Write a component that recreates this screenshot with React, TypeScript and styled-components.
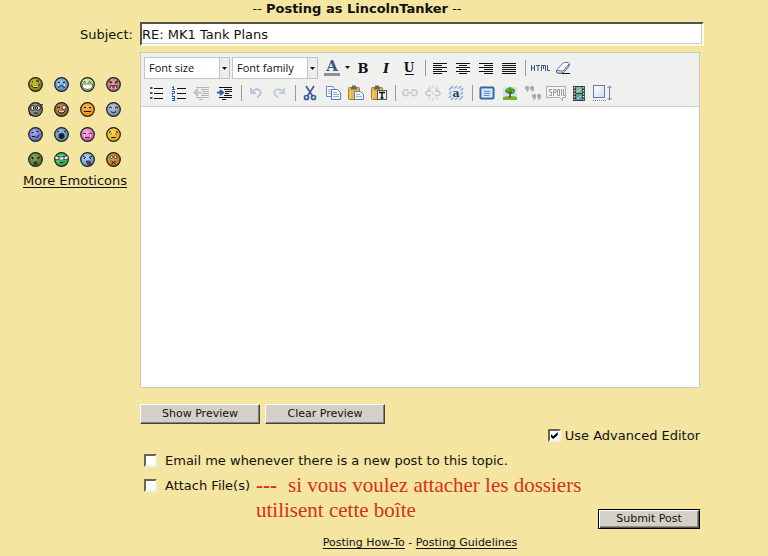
import React from "react";
import styled, { createGlobalStyle } from "styled-components";

const sans = `"DejaVu Sans", Verdana, sans-serif`;

const GlobalStyle = createGlobalStyle`
  *, *::before, *::after { box-sizing: border-box; }
  body { margin: 0; background: #f4e5a0; color: #111; font: 13px/17px ${sans}; }
`;

const Form = styled.form`padding: 0 68px 0 14px;`;
const Title = styled.h1`
  margin: 0 0 5px;
  font-size: 13px;
  line-height: 17px;
  font-weight: 400;
  text-align: center;
`;
const Columns = styled.div`
  display: grid;
  grid-template-columns: 122px minmax(0, 1fr);
  column-gap: 4px;
`;
const SubjectLabel = styled.label`
  padding: 4px 3px 0 0;
  text-align: right;
`;
const SubjectField = styled.div`
  display: flex;
  margin: 0 -4px 6px 0;
`;
const SubjectInput = styled.input`
  flex: 1;
  min-width: 0;
  height: 24px;
  padding: 0;
  border: 2px solid;
  border-color: #55534c #fffbe8 #fffbe8 #55534c;
  box-shadow: inset -1px -1px 0 #d0cdbb;
  border-radius: 0;
  background: #fff;
  color: #111;
  font: inherit;
`;
const Side = styled.aside`
  display: flex;
  flex-direction: column;
  align-items: center;
  padding-top: 25px;
`;
const FaceGrid = styled.div`
  display: grid;
  grid-template-columns: repeat(4, 15px);
  gap: 10px 11px;
  margin: 0 2px 5px 0;
`;
const FaceButton = styled.button`
  display: block;
  width: 15px;
  height: 15px;
  padding: 0;
  border: 0;
  background: none;
  cursor: pointer;
  svg { display: block; }
`;
const TextLink = styled.a`
  color: #111;
  text-decoration: underline;
  text-underline-offset: 2px;
`;
const Editor = styled.div`
  display: flex;
  flex-direction: column;
  border: 1px solid #ccc9b8;
  background: #fff;
`;
const Toolbar = styled.div`
  padding: 2px 3px 1px;
  background: #f0f0ee;
  border-bottom: 1px solid #ccc;
`;
const ToolRow = styled.div`
  display: flex;
  align-items: center;
  height: 25px;
`;
const Picker = styled.label`
  position: relative;
  width: 86px;
  height: 22px;
  margin-right: 2px;
  flex: none;
  svg { position: absolute; right: 1px; top: 1px; pointer-events: none; }
`;
const PickerSelect = styled.select`
  appearance: none;
  width: 100%;
  height: 100%;
  padding: 0 12px 0 4px;
  border: 1px solid #c4c4c4;
  border-radius: 0;
  background: #fff;
  color: #111;
  font: 11px/20px "Open Sans", sans-serif;
`;
const ToolButton = styled.button<{ $narrow?: boolean }>`
  flex: none;
  display: flex;
  justify-content: center;
  align-items: center;
  width: ${(p) => (p.$narrow ? 8 : 23)}px;
  height: 22px;
  padding: 0;
  border: 0;
  background: none;
  svg { display: block; flex: none; }
`;
const Separator = styled.span`
  flex: none;
  width: 1px;
  height: 16px;
  margin: 0 2px 0 5px;
  background: #999;
`;
const Message = styled.textarea`
  display: block;
  height: 280px;
  padding: 6px;
  border: 0;
  outline: 0;
  resize: none;
  background: #fff;
  font: inherit;
`;
const ButtonRow = styled.div`
  display: flex;
  gap: 5px;
  margin-top: 16px;
`;
const PushButton = styled.button<{ $primary?: boolean }>`
  flex: none;
  width: ${(p) => (p.$primary ? 102 : 120)}px;
  height: 20px;
  padding: 0;
  border: 1px solid;
  border-color: ${(p) => (p.$primary ? "#000" : "#fff #44423d #44423d #fff")};
  border-radius: 0;
  box-shadow: ${(p) =>
    p.$primary
      ? "inset 1px 1px 0 #fff, inset -1px -1px 0 #55534e, inset -2px -2px 0 #96928a"
      : "inset -1px -1px 0 #85817a"};
  background: #d4d0c8;
  color: #111;
  font: 11px/16px ${sans};
`;
const Options = styled.div`
  display: flex;
  flex-direction: column;
`;
const AdvancedLabel = styled.label`
  display: flex;
  align-items: center;
  align-self: flex-end;
  gap: 4px;
  margin: 3px 0 4px;
`;
const OptionLabel = styled.label`
  display: flex;
  align-items: center;
  flex: none;
  gap: 8px;
  height: 25px;
  padding-left: 4px;
`;
const AttachRow = styled.div`
  display: flex;
  align-items: flex-start;
  gap: 6px;
`;
const Note = styled.p`
  flex: 1;
  margin: 0;
  padding-bottom: 6px;
  color: #d8301c;
  font: 21px/25px "Liberation Serif", "Times New Roman", serif;
`;
const Dashes = styled.b`margin-right: 11px;`;
const SubmitSlot = styled.div`align-self: flex-end;`;
const Tick = styled.input`
  appearance: none;
  display: grid;
  place-content: center;
  width: 13px;
  height: 13px;
  margin: 0;
  border: 2px solid;
  border-color: #66635a #f3f0e6 #f3f0e6 #66635a;
  background: #fff;
  &:checked::after {
    content: "";
    width: 7px;
    height: 7px;
    background: #000;
    clip-path: polygon(0 29%, 36% 62%, 100% 0, 100% 42%, 36% 100%, 0 70%);
  }
`;
const Footer = styled.nav`
  margin-top: 7px;
  text-align: center;
  font-size: 11px;
  line-height: 13px;
`;

type Face = { name: string; color: string; light: string; art: React.ReactNode };
const ink = { stroke: "#111", fill: "none", strokeWidth: 1 };

const faces: Face[] = [
  { name: "Grin", color: "#7d7a10", light: "#c9c43a", art: <><path {...ink} d="M4 5h1M8 4h3M3 8c3 4 7 3 9-1" /><path stroke="#e8e36a" d="M5 9.5h5" /></> },
  { name: "Sad", color: "#5684c4", light: "#9cc0ee", art: <><path {...ink} d="M4 5.5h2M9 5.5h2M4.5 11c1-3 4-3 6 0" /><path stroke="#d9ecff" d="M4.5 7v2M10.5 7v2" /></> },
  { name: "Big smile", color: "#9fd070", light: "#d4f2ac", art: <><path {...ink} d="M3.500 5.500l1-1 1 1M8.500 5.500l1-1 1 1" /><path fill="#fff" stroke="#234" strokeWidth=".6" d="M2.500 7h10v3q-5 5-10 0z" /></> },
  { name: "Angry", color: "#9a787b", light: "#cbb0b0", art: <><path stroke="#800d18" strokeWidth="1.600" fill="none" d="M3 4l3 2M12 4L9 6" /><path fill="#c33" stroke="#611" strokeWidth=".7" d="M4 11V8.500h7V11" /><path stroke="#eee" d="M5.500 9.500v2M9.500 9.500v2" /></> },
  { name: "Nerd", color: "#77776b", light: "#a7a797", art: <><circle cx="5" cy="6" r="2.300" fill="#fff" stroke="#111" /><circle cx="10" cy="6" r="2.300" fill="#fff" stroke="#111" /><path stroke="#111" d="M5.500 5v2M9.500 5v2M6 11h4M12 3.500l3-1M1 11l2 3" /></> },
  { name: "Monocle", color: "#94602e", light: "#c08a51", art: <><path {...ink} d="M3 5l3 .5M4 9c2 3 5 3 7 0" /><circle cx="10" cy="5.500" r="2" fill="#dce9f0" stroke="#333" strokeWidth=".8" /><path stroke="#f1d5a4" d="M5 9.500h5" /></> },
  { name: "Neutral", color: "#e98c14", light: "#ffb844", art: <path {...ink} d="M4 5.500h2M9 5.500h2M4 9.500h7" /> },
  { name: "Content", color: "#6f899f", light: "#b8cbdc", art: <path {...ink} d="M3 6l1.500-1L6 6M9 6l1.500-1L12 6M5 9.500c2 1.500 3 1.500 5 0" /> },
  { name: "Skeptical", color: "#5c61b8", light: "#a9aef2", art: <path {...ink} d="M3.500 5.500h2M8.500 4.500h2M4 9.500h3l1 1h1l2-3" /> },
  { name: "Shocked", color: "#5d88b1", light: "#96bad8", art: <><path {...ink} d="M3 5l2-1M10 4l2 1" /><ellipse cx="7.500" cy="9" rx="3" ry="3" fill="#172233" /></> },
  { name: "Crying", color: "#ca5aaa", light: "#f7b0e0", art: <><path {...ink} stroke="#702456" d="M3 6.500h3M9 6.500h3M5.500 11v-.5h4v.5" /><path stroke="#ffddf5" d="M4.500 7v3M10.500 7v3" /></> },
  { name: "Worried", color: "#d8a817", light: "#ffdd4b", art: <path {...ink} d="M3 5.500l2-1M10 4.500l2 1M4.500 7h1M9.500 7h1M5.500 11v-.5h4v.5" /> },
  { name: "Ill", color: "#4e6f2b", light: "#86a95a", art: <><path {...ink} d="M3 5l2.500 1L4 7M12 5L9.500 6 11 7" /><path fill="#1d3514" d="M6 9.500h3l.5 3h-4z" /></> },
  { name: "Ninja", color: "#28a050", light: "#63e080", art: <><path fill="#fff" stroke="#222" strokeWidth=".7" d="M1 4q6 2 13 0v3Q7 9 1 7z" /><path {...ink} d="M4 6h2M9 6h2M6 10.500h3l1-1" /></> },
  { name: "Yelling", color: "#4f8ec2", light: "#b5def5", art: <><path {...ink} d="M3 4l2.500 1.500L4 7M12 4L9.500 5.500 11 7" /><path fill="#842b59" stroke="#222" strokeWidth=".6" d="M6 9h4l1 3-3 1z" /></> },
  { name: "Dizzy", color: "#a8691c", light: "#e8b050", art: <><circle cx="5.500" cy="5" r="1.500" fill="#fff0bd" stroke="#222" strokeWidth=".8" /><circle cx="9.500" cy="5" r="1.500" fill="#fff0bd" stroke="#222" strokeWidth=".8" /><path {...ink} d="M5.500 9l2 1.500 2-1.500M5.500 12l2-1.500 2 1.500" /></> },
];

function FaceIcon({ face, id }: { face: Face; id: string }) {
  return (
    <svg width="15" height="15" viewBox="0 0 15 15">
      <defs>
        <radialGradient id={id} cx="40%" cy="35%" r="65%">
          <stop offset="0" stopColor={face.light} />
          <stop offset="1" stopColor={face.color} />
        </radialGradient>
      </defs>
      <circle cx="7.500" cy="7.500" r="6.800" fill={`url(#${id})`} stroke="#1c1c1c" strokeWidth="1.200" />
      {face.art}
    </svg>
  );
}

function Icon({ children }: { children: React.ReactNode }) {
  return <svg width="20" height="20" viewBox="0 0 20 20" fill="none">{children}</svg>;
}

const serif = `"DejaVu Serif", serif`;
const glyph = (size: number, fill = "#111") => ({ fontFamily: serif, fontSize: size, fontWeight: 700, fill, textAnchor: "middle" as const });

const alignIcon = (d: string) => <Icon><path stroke="#111" d={d} /></Icon>;
const clipboard = (
  <>
    <rect x="2.500" y="4.500" width="11" height="12" rx="1" fill="#e5b84b" stroke="#a87b1e" />
    <path d="M5 5.500h6M6 3.500h4" stroke="#66665c" strokeWidth="2" />
    <path d="M4 8v7" stroke="#f8df90" />
  </>
);
const quoteMark = (x: number, y: number) => (
  <path key={`${x}-${y}`} fill="#aaa" d={`M${x} ${y}h2l1 1v3l-2 2h-1l1-2h-1l-1-1v-2z`} />
);

type Tool = { name: string; icon: React.ReactNode; narrow?: boolean } | null;

const formatTools: Tool[] = [
  { name: "Text color", icon: <Icon><text x="10" y="13" {...glyph(15, "#3a5683")}>A</text><rect x="2" y="15" width="16" height="3" fill="#8c8f94" /></Icon> },
  { name: "More colors", narrow: true, icon: <svg width="5" height="3"><path d="M0 0h5L2.500 3z" fill="#111" /></svg> },
  { name: "Bold", icon: <Icon><text x="10" y="15" {...glyph(13)}>B</text></Icon> },
  { name: "Italic", icon: <Icon><text x="10" y="15" {...glyph(13)} fontStyle="italic">I</text></Icon> },
  { name: "Underline", icon: <Icon><text x="10" y="14" {...glyph(12)}>U</text><path stroke="#111" d="M6 16.500h9" /></Icon> },
  null,
  { name: "Align left", icon: alignIcon("M3 5.500h14M3 7.500h9M3 9.500h14M3 11.500h9M3 13.500h14M3 15.500h9") },
  { name: "Align center", icon: alignIcon("M3 5.500h14M6 7.500h8M3 9.500h14M6 11.500h8M3 13.500h14M6 15.500h8") },
  { name: "Align right", icon: alignIcon("M3 5.500h14M8 7.500h9M3 9.500h14M8 11.500h9M3 13.500h14M8 15.500h9") },
  { name: "Justify", icon: alignIcon("M3 5.500h14M3 7.500h14M3 9.500h14M3 11.500h14M3 13.500h14M3 15.500h14") },
  null,
  { name: "Edit HTML", icon: <Icon><path stroke="#3a5683" d="M1.500 7v6M4.500 7v6M1.500 10h3M6 7.500h4M8 7v6M11.500 13V7.500h4V13M13.500 8v3M17.500 7v5.500H20" /></Icon> },
  { name: "Remove formatting", icon: <Icon><path fill="#fff" stroke="#66758f" d="M3.500 12.500l6-7 2-1h4l1 1v2l-6 7-1 1h-4l-2-1z" /><path fill="#dbe3f2" stroke="#66758f" d="M3.500 12.500l6.500.5 6-7v2l-6 7H5l-1.500-1z" /><path stroke="#111" d="M9 15.500h8" /></Icon> },
];

const insertTools: Tool[] = [
  { name: "Bulleted list", icon: <Icon><path stroke="#111" d="M8 5.500h9M8 10.500h9M8 15.500h9" /><path stroke="#3a5683" strokeWidth="2" d="M4 5h2.500M4 10h2.500M4 15h2.500" /></Icon> },
  { name: "Numbered list", icon: <Icon><path stroke="#111" d="M8 5.500h9M8 10.500h9M8 15.500h9" /><path stroke="#2e61b5" d="M3 4.500h2M4.500 3v4M3 6.500h3M3 8.500h3M5.500 9v1M3 10.500h2.500M3.500 11v1.500M3 13.500h3M3 15.500h3M3 17.500h3M5.500 13v4" /></Icon> },
  { name: "Outdent", icon: <Icon><path stroke="#b5b5b5" d="M4 4.500h13M9 6.500h8M10 8.500h7M10 10.500h7M9 12.500h8M4 14.500h13M7 16.500h4" /><path stroke="#b5c1cb" strokeWidth="2" d="M2 9.500h7M6 6L2.500 9.500 6 13" /></Icon> },
  { name: "Indent", icon: <Icon><path stroke="#111" d="M4 4.500h13M9 6.500h8M10 8.500h7M10 10.500h4M9 12.500h8M4 14.500h13M7 16.500h4" /><path stroke="#2f5aa5" strokeWidth="2" d="M2 9.500h5M5 7l3 2.500L5 12" /></Icon> },
  null,
  { name: "Undo", icon: <Icon><path stroke="#b6c5dc" strokeWidth="2" d="M5 5v5h5M5.500 9.500q4-5 8-2.500 3 4-2.500 7.500" /></Icon> },
  { name: "Redo", icon: <Icon><path stroke="#c1cddd" strokeWidth="2" d="M15 5v5h-5M14.500 9.500q-4-5-8-2.500-3 4 2.500 7.500" /></Icon> },
  null,
  { name: "Cut", icon: <Icon><path stroke="#445c83" strokeWidth="1.700" d="M6 3l6.500 10M14 3L7.500 13" /><circle cx="6.500" cy="14.500" r="2" stroke="#315fa6" strokeWidth="1.700" /><circle cx="13.500" cy="14.500" r="2" stroke="#315fa6" strokeWidth="1.700" /></Icon> },
  { name: "Copy", icon: <Icon><path fill="#fff" stroke="#6685ba" d="M3.500 3.500h6l2 2v8h-8z" /><path stroke="#8faadb" d="M5 6.500h4M5 8.500h5M5 10.500h4" /><path fill="#f5faff" stroke="#5578ad" d="M8.500 6.500h6l3 3v7h-9z" /><path stroke="#8faadb" d="M10 9.500h4M10 11.500h6M10 13.500h6" /></Icon> },
  { name: "Paste", icon: <Icon>{clipboard}<path fill="#edf4ff" stroke="#6682ae" d="M8.500 8.500h6l3 3v5h-9z" /><path stroke="#9bb1d5" d="M10 11.500h4M10 13.500h6" /></Icon> },
  { name: "Paste as text", icon: <Icon>{clipboard}<rect x="8.500" y="7.500" width="9" height="9" fill="#f5f5f0" stroke="#55585f" /><path stroke="#111" strokeWidth="1.500" d="M10 9.500h6M13 9v6M11.500 15h3" /></Icon> },
  null,
  { name: "Insert link", icon: <Icon><path stroke="#c1c7ce" strokeWidth="1.500" d="M8.500 8l-1-1h-3L3 9v2l1.500 1.500h3l1-1M11.500 8l1-1h3L17 9v2l-1.500 1.500h-3l-1-1M7 9.800h6" /></Icon> },
  { name: "Remove link", icon: <Icon><path stroke="#c1c7ce" strokeWidth="1.500" d="M8 8H4.500L3 9.500V11l1.500 1.500H8M12 8h3.500L17 9.500V11l-1.500 1.500H12" /><path stroke="#c8c8c8" d="M10 2v3M6 3l2 3M14 3l-2 3M4 5l3 2M16 5l-3 2M10 15v3M7 14l-2 3M13 14l2 3M9 9l2 3" /></Icon> },
  { name: "Anchor", icon: <Icon><path stroke="#7f9de1" strokeWidth="1.200" d="M3 7l4-4M3 11l8-8M3 15l12-12M5 17L17 5M9 17l8-8M13 17l4-4" /><rect x="5.500" y="5.500" width="9" height="9" fill="#e6edf9" /><text x="10" y="14" {...glyph(11, "#25334d")}>a</text></Icon> },
  null,
  { name: "Full screen", icon: <Icon><rect x="3" y="4" width="14" height="12" rx="1" fill="#3b71b8" stroke="#355d97" /><rect x="5" y="6" width="10" height="8" fill="#c7ddfa" stroke="#eef5ff" /><path stroke="#6896d1" d="M7 8.500h6M7 10.500h6M7 12.500h5" /></Icon> },
  { name: "Insert image", icon: <Icon><rect x="3" y="4" width="14" height="13" fill="#c6e8ed" /><path fill="#78ae31" d="M3 14q7-2 14 0v3H3z" /><path fill="#4b9a25" d="M6 10l-1-2 1-2 2-1 2-1 3 1 2 2 0 2-2 2-2-1-2 1-2-1z" /><path stroke="#614017" strokeWidth="1.500" d="M10 9v6M10 11l2-2" /><path stroke="#85bf35" d="M7 6.500h2M11 5.500h2M12 8.500h2" /></Icon> },
  { name: "Quote", icon: <Icon>{[[3, 3], [8, 3], [10, 11], [15, 11]].map(([x, y]) => quoteMark(x, y))}</Icon> },
  { name: "Spoiler", icon: <Icon><path fill="#f6f6f4" stroke="#aaa" d="M.5 3.500h19v11h-3v3l-3-3H.5z" /><path stroke="#999" d="M6 6.500H3.500v2.500h2v3.500H3M7.500 13V6.500H10v3H8M11.500 6.500h2v6h-2zM15.500 6v7M17.500 6v6.500H19" /></Icon> },
  { name: "Insert video", icon: <Icon><rect x="4" y="3" width="12" height="15" fill="#323d37" /><rect x="7" y="4" width="6" height="6" fill="#73b79a" /><rect x="7" y="11" width="6" height="6" fill="#5b9bb0" /><path stroke="#d2ded0" strokeWidth="1.500" strokeDasharray="1.500 1.500" d="M5.500 4v13M14.500 4v13" /><path stroke="#c5dec2" d="M8 9l4-3M8 16l4-3" /></Icon> },
  { name: "Resize editor", icon: <Icon><defs><linearGradient id="sheet" x1="0" y1="0" x2="1" y2="1"><stop offset="0" stopColor="#fff" /><stop offset="1" stopColor="#d0dbef" /></linearGradient></defs><rect x="1.500" y="2.500" width="11" height="12" fill="url(#sheet)" stroke="#657dad" /><path stroke="#657dad" d="M2 14.500h11M17.500 3v14M15.500 5l2-2 2 2M15.500 15l2 2 2-2" /><path stroke="#7c82ad" strokeDasharray="1 1" d="M1 17.500h13" /></Icon> },
];

function Tools({ items }: { items: Tool[] }) {
  return (
    <>
      {items.map((tool, i) =>
        tool ? (
          <ToolButton key={i} type="button" $narrow={tool.narrow} aria-label={tool.name}>{tool.icon}</ToolButton>
        ) : (
          <Separator key={i} />
        )
      )}
    </>
  );
}

function FontPicker({ label }: { label: string }) {
  return (
    <Picker>
      <PickerSelect aria-label={label}><option>{label}</option></PickerSelect>
      <svg width="10" height="20"><path fill="#eee" d="M0 0h10v20H0z" /><path stroke="#c4c4c4" d="M.5 0v20" /><path fill="#111" d="M3 9h5l-2.500 3z" /></svg>
    </Picker>
  );
}

export default function App() {
  return (
    <>
      <GlobalStyle />
      <Form onSubmit={(e) => e.preventDefault()}>
        <Title>-- <b>Posting as LincolnTanker</b> --</Title>
        <Columns>
          <SubjectLabel htmlFor="subject">Subject:</SubjectLabel>
          <SubjectField><SubjectInput id="subject" defaultValue="RE: MK1 Tank Plans" /></SubjectField>
          <Side>
            <FaceGrid>
              {faces.map((face, i) => (
                <FaceButton key={face.name} type="button" aria-label={face.name}><FaceIcon face={face} id={`face-${i}`} /></FaceButton>
              ))}
            </FaceGrid>
            <TextLink href="#emoticons">More Emoticons</TextLink>
          </Side>
          <div>
            <Editor>
              <Toolbar>
                <ToolRow><FontPicker label="Font size" /><FontPicker label="Font family" /><Tools items={formatTools} /></ToolRow>
                <ToolRow><Tools items={insertTools} /></ToolRow>
              </Toolbar>
              <Message aria-label="Message" />
            </Editor>
            <ButtonRow>
              <PushButton type="button">Show Preview</PushButton>
              <PushButton type="button">Clear Preview</PushButton>
            </ButtonRow>
            <Options>
              <AdvancedLabel><Tick type="checkbox" defaultChecked />Use Advanced Editor</AdvancedLabel>
              <OptionLabel><Tick type="checkbox" />Email me whenever there is a new post to this topic.</OptionLabel>
              <AttachRow>
                <OptionLabel><Tick type="checkbox" />Attach File(s)</OptionLabel>
                <Note><Dashes>---</Dashes>si vous voulez attacher les dossiers<br />utilisent cette boîte</Note>
                <SubmitSlot><PushButton $primary type="submit">Submit Post</PushButton></SubmitSlot>
              </AttachRow>
            </Options>
            <Footer><TextLink href="#how-to">Posting How-To</TextLink> - <TextLink href="#guidelines">Posting Guidelines</TextLink></Footer>
          </div>
        </Columns>
      </Form>
    </>
  );
}
